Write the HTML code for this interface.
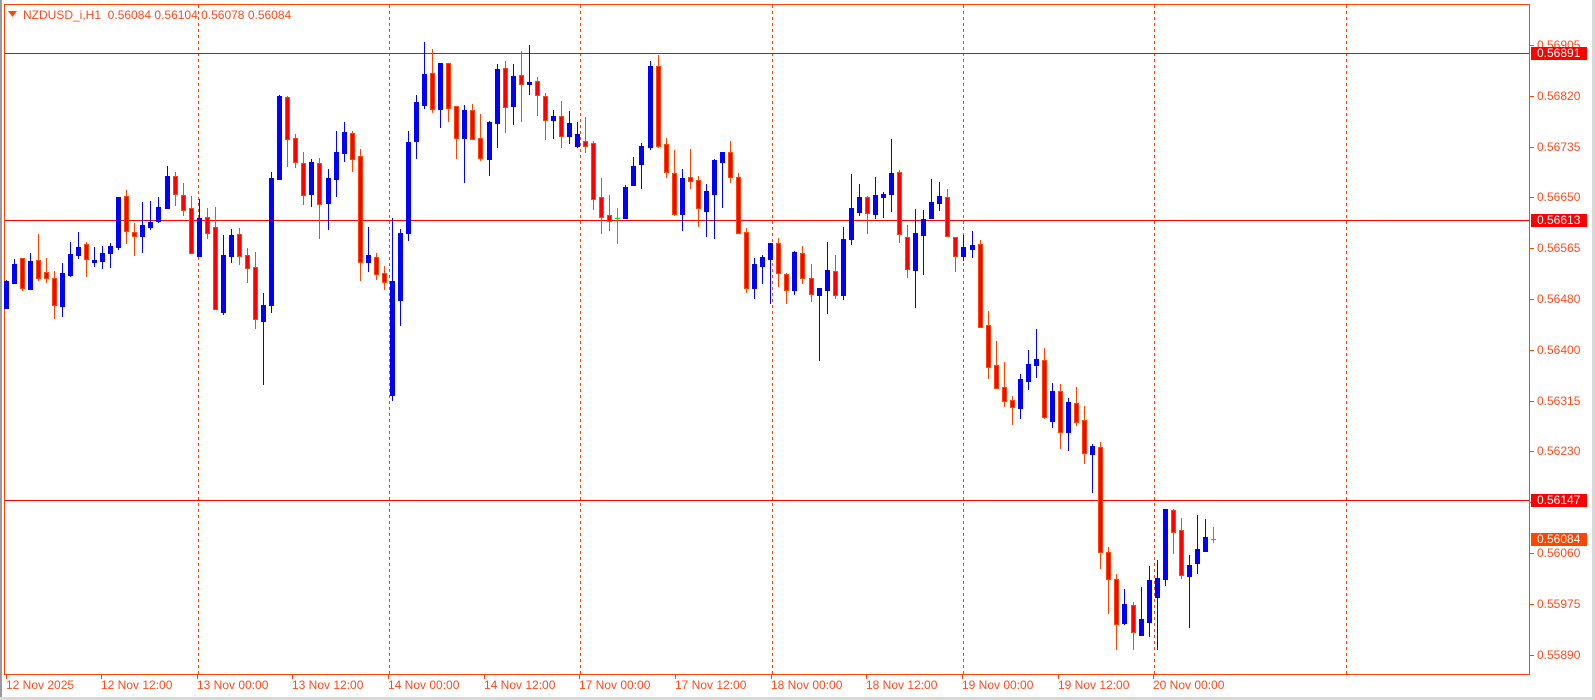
<!DOCTYPE html>
<html><head><meta charset="utf-8"><style>
html,body{margin:0;padding:0;background:#fff;width:1595px;height:700px;overflow:hidden}
svg{display:block}
text{font-family:"Liberation Sans",Tahoma,sans-serif;font-size:12px}
</style></head><body>
<svg id="s" width="1595" height="700" xmlns="http://www.w3.org/2000/svg">
<rect x="0" y="0" width="1595" height="700" fill="#fff"/>
<rect x="0" y="0" width="2" height="700" fill="#9a9a9a"/>
<rect x="0" y="697" width="1595" height="3" fill="#d8d8d8"/>
<rect x="1592" y="0" width="3" height="700" fill="#d8d8d8"/>
<g id="grid"></g>
<line x1="4.5" y1="4.5" x2="1529.5" y2="4.5" stroke="#ff4500"/>
<line x1="4.5" y1="4" x2="4.5" y2="674" stroke="#ff4500"/>
<line x1="4" y1="674.5" x2="1529.5" y2="674.5" stroke="#ff4500"/>
<line x1="1529.5" y1="4" x2="1529.5" y2="675" stroke="#ff4500"/>
<line x1="5" y1="53.5" x2="1529" y2="53.5" stroke="#ff0000"/>
<line x1="5" y1="220.5" x2="1529" y2="220.5" stroke="#ff0000"/>
<line x1="5" y1="500.5" x2="1529" y2="500.5" stroke="#ff0000"/>
<g id="c"></g>
<g id="ax"></g>
<polygon points="8,11 17,11 12.5,17" fill="#ff4500"/>
<text x="23" y="19" fill="#ff4a1c" xml:space="preserve">NZDUSD_i,H1  0.56084 0.56104 0.56078 0.56084</text>
</svg>
<script>
var NS="http://www.w3.org/2000/svg";
function el(p,t,a,txt){var e=document.createElementNS(NS,t);for(var k in a)e.setAttribute(k,a[k]);if(txt)e.textContent=txt;p.appendChild(e);return e;}
var g=document.getElementById('grid'),c=document.getElementById('c'),ax=document.getElementById('ax');
for(var k=0;k<7;k++){var x=Math.round(197.7+191.3*k)+0.5;el(g,'line',{x1:x,y1:5,x2:x,y2:674,stroke:'#ff4500','stroke-dasharray':'3,3'});}
var D="b 281 308 280 308|b 264 283 259 283|r 258 288 258 290|b 261 289 253 289|r 260 278 234 280|r 272 278 258 282|r 278 305 271 318|b 273 306 263 316|b 254 275 242 276|b 247 255 232 258|r 244 259 242 276|b 260 262 247 266|b 253 261 246 268|b 246 253 243 267|b 197 247 197 249|r 196 231 190 243|r 232 236 223 255|b 225 236 202 252|b 222 227 201 229|b 207 221 197 222|b 176 208 166 208|r 176 194 172 205|r 195 210 183 215|r 208 253 196 253|b 218 256 199 256|r 217 233 208 238|r 227 309 207 309|b 255 312 235 314|b 235 256 229 262|r 234 256 228 264|r 255 268 248 282|r 267 319 252 328|b 305 321 293 384|b 178 305 172 312|b 96 179 95 179|r 97 139 96 166|r 138 162 134 167|r 163 195 152 204|b 162 194 159 206|r 163 204 158 238|b 178 203 169 229|b 152 179 131 196|b 132 153 122 161|r 133 159 131 171|r 156 262 149 280|b 255 262 227 271|r 257 274 253 279|r 273 282 266 289|b 281 395 218 400|b 233 300 229 325|b 142 233 131 240|b 102 141 95 158|b 74 105 42 108|r 73 109 49 112|b 63 109 63 127|r 63 108 63 121|r 106 138 106 158|b 110 138 105 182|r 110 139 104 139|r 138 158 114 160|b 122 159 121 175|b 69 123 64 147|r 68 107 61 132|b 76 106 64 124|r 75 84 51 121|b 82 84 45 94|r 81 95 77 115|r 96 120 93 139|b 116 120 110 138|r 116 136 101 147|b 123 136 111 143|b 134 146 122 147|r 141 146 117 152|r 143 199 141 209|r 197 217 178 233|r 215 221 195 230|g 218 218 208 243|b 187 218 185 218|b 166 185 157 185|b 146 164 143 188|b 66 147 61 149|r 66 146 55 147|r 144 172 138 177|r 173 214 150 215|b 178 214 169 230|r 177 181 149 188|r 180 208 176 226|b 191 211 184 236|b 160 194 159 238|b 152 162 152 207|r 152 177 141 182|r 177 233 173 233|r 232 288 228 292|b 264 288 258 298|b 257 266 255 283|b 243 259 243 303|r 243 273 238 286|r 274 290 273 303|b 252 290 251 294|r 253 278 246 283|r 278 294 264 301|b 288 295 288 360|b 270 290 242 313|r 271 295 255 298|b 239 295 227 299|b 208 239 174 244|b 197 212 184 215|r 197 213 196 233|b 195 214 177 218|b 194 197 192 217|b 173 194 139 211|r 172 234 170 242|r 237 269 225 277|b 233 270 209 307|b 219 235 210 274|b 202 218 179 218|b 196 203 182 210|r 197 236 189 236|r 237 256 237 271|b 247 256 235 260|b 245 249 231 257|r 244 327 240 327|r 325 367 311 378|r 365 388 341 388|r 387 401 362 406|r 400 407 396 424|b 379 408 374 418|b 364 381 350 389|b 359 365 329 377|r 360 417 348 418|b 391 421 383 427|r 391 432 384 448|b 402 432 398 450|r 403 422 387 425|r 420 453 406 463|b 446 454 444 492|r 447 552 442 568|r 552 579 547 613|r 579 624 574 649|b 604 623 589 624|r 605 632 602 649|b 619 635 587 635|b 580 622 566 636|b 578 597 560 649|b 509 579 509 585|r 510 532 509 553|r 530 575 518 578|b 565 576 555 627|b 549 563 515 573|b 537 551 519 551|g 539 539 527 542".split('|');
D.forEach(function(s,i){var p=s.split(' '),t=p[0],a=+p[1],b=+p[2],h=+p[3],l=+p[4];
var x=Math.round(5.5+8.05*i);
var col=t=='b'?'#0000ff':(t=='g'?'#00dd00':'#ff4500');
el(c,'rect',{x:x,y:h,width:1,height:Math.max(1,l-h+1),fill:col});
if(t=='g'){el(c,'rect',{x:x-2,y:a,width:5,height:1,fill:col});return;}
var bh=Math.max(2,b-a+1);
if(t=='b'){el(c,'rect',{x:x-2,y:a,width:5,height:bh,fill:'#0000ff'});}
else{el(c,'rect',{x:x-2,y:a,width:5,height:bh,fill:'#ff4500'});if(bh>2)el(c,'rect',{x:x-1,y:a+1,width:3,height:bh-2,fill:'#ff0000'});}
});
var PV=['0.56905','0.56820','0.56735','0.56650','0.56565','0.56480','0.56400','0.56315','0.56230','0.56145','0.56060','0.55975','0.55890'];
for(var j=0;j<13;j++){var y=Math.round(45+j*50.8);
el(ax,'line',{x1:1529,y1:y+0.5,x2:1534,y2:y+0.5,stroke:'#ff4500'});
el(ax,'text',{x:1537,y:y+4,fill:'#ff4a1c'},PV[j]);}
function box(y,v,bg){el(ax,'rect',{x:1531,y:y-6,width:56,height:13,fill:bg});el(ax,'text',{x:1537,y:y+4,fill:'#fff'},v);}
box(53,'0.56891','#ff0000');box(220,'0.56613','#ff0000');box(500,'0.56147','#ff0000');box(539,'0.56084','#ff4500');
var L=['12 Nov 2025','12 Nov 12:00','13 Nov 00:00','13 Nov 12:00','14 Nov 00:00','14 Nov 12:00','17 Nov 00:00','17 Nov 12:00','18 Nov 00:00','18 Nov 12:00','19 Nov 00:00','19 Nov 12:00','20 Nov 00:00'];
L.forEach(function(s,k){var x=Math.round(5.5+95.65*k);el(ax,'line',{x1:x+0.5,y1:674,x2:x+0.5,y2:679,stroke:'#ff4500'});el(ax,'text',{x:x,y:689,fill:'#ff4a1c'},s);});
</script>
</body></html>
